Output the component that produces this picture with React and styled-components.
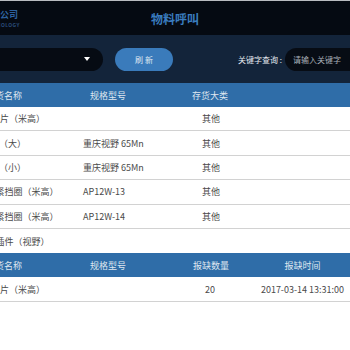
import React from 'react';
import styled, { createGlobalStyle } from 'styled-components';

const Global = createGlobalStyle`
  html, body { margin: 0; padding: 0; background: #ffffff; overflow: hidden; }
  body { font-family: "Noto Sans CJK SC", "Noto Sans", sans-serif; }
  * { box-sizing: border-box; }
`;

const Page = styled.div`
  width: 350px;
  height: 350px;
  overflow: hidden;
  display: flex;
  flex-direction: column;
`;

const TopBar = styled.header`
  height: 35px;
  flex-shrink: 0;
  background: #050a12;
  border-top: 1px solid #b9bcc0;
  display: grid;
  grid-template-columns: 1fr auto 1fr;
  align-items: center;
`;

const Logo = styled.div`
  display: flex;
  flex-direction: column;
  align-items: flex-start;
  margin-left: -18px;
  line-height: 1;
`;

const LogoName = styled.span`
  font-size: 9px;
  font-weight: 700;
  color: #2d62a0;
  white-space: nowrap;
`;

const LogoSub = styled.span`
  font-size: 5px;
  font-weight: 700;
  color: #2a4c7a;
  letter-spacing: 0.4px;
  margin-top: 3px;
  white-space: nowrap;
`;

const Title = styled.h1`
  margin: 0;
  font-size: 12px;
  font-weight: 700;
  color: #3a7cbf;
  letter-spacing: 0;
`;

const Toolbar = styled.div`
  height: 48px;
  flex-shrink: 0;
  background: #13243a;
  display: flex;
  align-items: center;
`;

const Select = styled.div`
  flex-shrink: 0;
  margin-left: -57px;
  width: 160px;
  height: 23px;
  border-radius: 12px;
  background: #060b13;
  display: flex;
  align-items: center;
  justify-content: flex-end;
  padding-right: 13px;
`;

const Caret = styled.span`
  width: 0;
  height: 0;
  border-left: 3.5px solid transparent;
  border-right: 3.5px solid transparent;
  border-top: 4px solid #ffffff;
`;

const Button = styled.button`
  flex-shrink: 0;
  margin-left: 12px;
  width: 58px;
  height: 23px;
  border: none;
  border-radius: 12px;
  background: #3a7bbb;
  color: #dfe8f2;
  font-family: inherit;
  font-size: 8px;
  letter-spacing: 2px;
  padding: 0 0 0 2px;
`;

const Label = styled.span`
  flex-shrink: 0;
  margin-left: 65px;
  font-size: 8px;
  color: #e6ebf0;
  white-space: nowrap;
`;

const Input = styled.div`
  flex-shrink: 0;
  margin-left: 3px;
  width: 90px;
  height: 23px;
  border-radius: 12px;
  background: #070c14;
  color: #a9b0b8;
  font-size: 8px;
  display: flex;
  align-items: center;
  padding-left: 8px;
  white-space: nowrap;
`;

const Table = styled.div`
  display: flex;
  flex-direction: column;
`;

const Row = styled.div`
  display: grid;
  grid-template-columns: 83px 92px 80px 95px;
  align-items: center;
  height: ${(p) => (p.$head ? '24px' : '24.4px')};
  background: ${(p) => (p.$head ? '#2f6da8' : '#ffffff')};
  color: ${(p) => (p.$head ? '#dfe7f0' : '#4a4a4a')};
  border-bottom: ${(p) => (p.$line ? '1px solid #d2d2d2' : 'none')};
  font-size: 9px;
`;

const Cell = styled.div`
  white-space: nowrap;
  overflow: ${(p) => (p.$clip ? 'hidden' : 'visible')};
  text-align: ${(p) => p.$align || 'left'};
  padding-left: ${(p) => p.$pad || 0}px;
`;

const Clipped = styled.span`
  display: inline-block;
  margin-left: ${(p) => -p.$cut}px;
`;

const stock = [
  { name: '垫片（米高）', cut: 9, spec: '', cat: '其他' },
  { name: '弹簧（大）', cut: 19, spec: '重庆视野 65Mn', cat: '其他' },
  { name: '弹簧（小）', cut: 19, spec: '重庆视野 65Mn', cat: '其他' },
  { name: '锁紧挡圈（米高）', cut: 13.5, spec: 'AP12W-13', cat: '其他' },
  { name: '锁紧挡圈（米高）', cut: 13.5, spec: 'AP12W-14', cat: '其他' },
  { name: '接插件（视野）', cut: 13.5, spec: '', cat: '' },
];

const shortage = [
  { name: '垫片（米高）', cut: 9, spec: '', qty: '20', time: '2017-03-14 13:31:00' },
];

export default function App() {
  return (
    <Page>
      <Global />
      <TopBar>
        <Logo>
          <LogoName>科技公司</LogoName>
          <LogoSub>TECHNOLOGY</LogoSub>
        </Logo>
        <Title>物料呼叫</Title>
        <div />
      </TopBar>
      <Toolbar>
        <Select>
          <Caret />
        </Select>
        <Button>刷新</Button>
        <Label>关键字查询 :</Label>
        <Input>请输入关键字</Input>
      </Toolbar>
      <Table>
        <Row $head>
          <Cell $clip><Clipped $cut={14}>存货名称</Clipped></Cell>
          <Cell $pad={7}>规格型号</Cell>
          <Cell $pad={17}>存货大类</Cell>
          <Cell />
        </Row>
        {stock.map((r, i) => (
          <Row key={i} $line={i < stock.length - 1}>
            <Cell $clip><Clipped $cut={r.cut}>{r.name}</Clipped></Cell>
            <Cell>{r.spec}</Cell>
            <Cell $pad={27}>{r.cat}</Cell>
            <Cell />
          </Row>
        ))}
        <Row $head>
          <Cell $clip><Clipped $cut={14}>存货名称</Clipped></Cell>
          <Cell $pad={7}>规格型号</Cell>
          <Cell $pad={18}>报缺数量</Cell>
          <Cell $align="center">报缺时间</Cell>
        </Row>
        {shortage.map((r, i) => (
          <Row key={i} $line>
            <Cell $clip><Clipped $cut={r.cut}>{r.name}</Clipped></Cell>
            <Cell>{r.spec}</Cell>
            <Cell $pad={30}>{r.qty}</Cell>
            <Cell $align="center">{r.time}</Cell>
          </Row>
        ))}
      </Table>
    </Page>
  );
}
